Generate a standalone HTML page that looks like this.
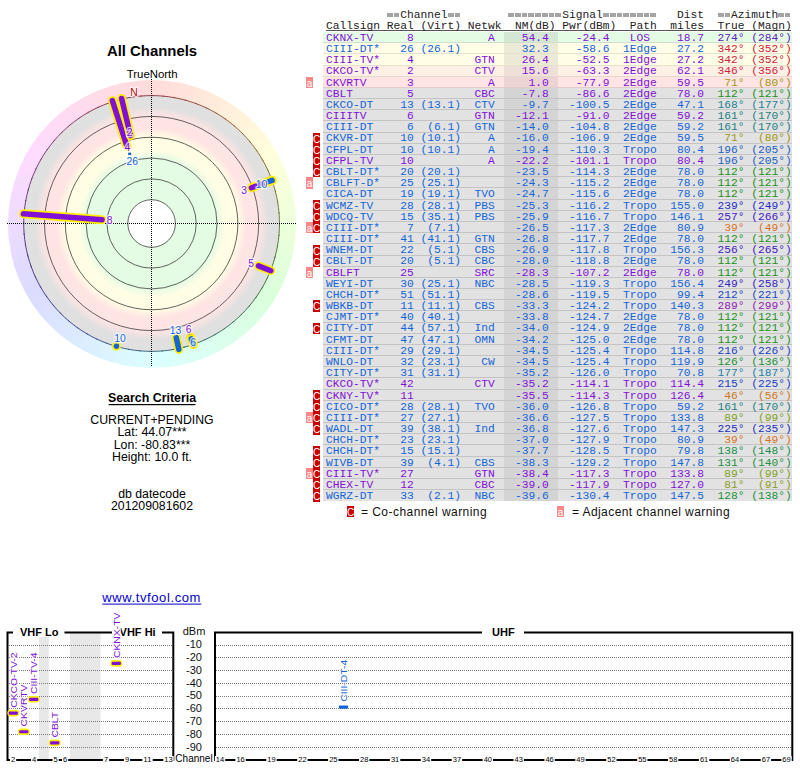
<!DOCTYPE html>
<html><head><meta charset="utf-8"><style>
html,body{margin:0;padding:0;background:#fff;width:800px;height:768px;overflow:hidden;position:relative}
.s{font-family:"Liberation Sans",sans-serif}
.m{font-family:"Liberation Mono",monospace}
.a{position:absolute;white-space:pre}
.row{position:absolute;left:323px;width:469px}
.sep{position:absolute;left:323px;width:469px;height:1px;z-index:1}
.tx{position:absolute;z-index:2;left:325.90px;font-family:"Liberation Mono",monospace;font-size:11.25px;line-height:11.18px;white-space:pre}
.fl{position:absolute;width:7px;color:#fff;font-family:"Liberation Sans",sans-serif;font-size:10px;line-height:11px;text-align:center;overflow:hidden}
</style></head><body>

<div class="tx" style="top:9.6px;color:#222">           Channel                 Signal           Dist    Azimuth</div>
<div class="a" style="left:386.85px;top:13px;width:12.50px;height:4px;background:repeating-linear-gradient(90deg,#a4a4a4 0,#a4a4a4 5.75px,transparent 5.75px,transparent 6.75px)"></div>
<div class="a" style="left:447.60px;top:13px;width:12.50px;height:4px;background:repeating-linear-gradient(90deg,#a4a4a4 0,#a4a4a4 5.75px,transparent 5.75px,transparent 6.75px)"></div>
<div class="a" style="left:508.35px;top:13px;width:53.00px;height:4px;background:repeating-linear-gradient(90deg,#a4a4a4 0,#a4a4a4 5.75px,transparent 5.75px,transparent 6.75px)"></div>
<div class="a" style="left:602.85px;top:13px;width:53.00px;height:4px;background:repeating-linear-gradient(90deg,#a4a4a4 0,#a4a4a4 5.75px,transparent 5.75px,transparent 6.75px)"></div>
<div class="a" style="left:717.60px;top:13px;width:12.50px;height:4px;background:repeating-linear-gradient(90deg,#a4a4a4 0,#a4a4a4 5.75px,transparent 5.75px,transparent 6.75px)"></div>
<div class="a" style="left:778.35px;top:13px;width:12.50px;height:4px;background:repeating-linear-gradient(90deg,#a4a4a4 0,#a4a4a4 5.75px,transparent 5.75px,transparent 6.75px)"></div>
<div class="tx" style="top:20.9px;color:#222">Callsign Real (Virt) Netwk  NM(dB) Pwr(dBm)  Path  miles  True (Magn)</div>
<div class="a" style="left:326px;top:30px;width:465px;height:1px;background:#555"></div>
<div class="row" style="top:31.60px;height:11.18px;background:#e4fce4"></div>
<div class="row" style="top:31.60px;height:11.18px;left:504px;width:54px;background:#d4e6d4"></div>
<div class="sep" style="top:42.18px;background:#cfe0cf"></div>
<div class="tx" style="top:32.90px;color:#8010d8">CKNX-TV     8           A    54.4    -24.4   LOS    18.7<span style="color:#6020c0">  274° (284°)</span></div>
<div class="row" style="top:42.78px;height:11.18px;background:#fffde6"></div>
<div class="row" style="top:42.78px;height:11.18px;left:504px;width:54px;background:#ecead6"></div>
<div class="sep" style="top:53.35px;background:#e4e2cc"></div>
<div class="tx" style="top:44.08px;color:#1464d8">CIII-DT*   26 (26.1)         32.3    -58.6  1Edge   27.2<span style="color:#d02040">  342° (352°)</span></div>
<div class="row" style="top:53.95px;height:11.18px;background:#fffde6"></div>
<div class="row" style="top:53.95px;height:11.18px;left:504px;width:54px;background:#ecead6"></div>
<div class="sep" style="top:64.53px;background:#e4e2cc"></div>
<div class="tx" style="top:55.25px;color:#8010d8">CIII-TV*    4         GTN    26.4    -52.5  1Edge   27.2<span style="color:#d02040">  342° (352°)</span></div>
<div class="row" style="top:65.12px;height:11.18px;background:#fff0e6"></div>
<div class="row" style="top:65.12px;height:11.18px;left:504px;width:54px;background:#eee0d6"></div>
<div class="sep" style="top:75.70px;background:#e6d8cc"></div>
<div class="tx" style="top:66.42px;color:#8010d8">CKCO-TV*    2         CTV    15.6    -63.3  2Edge   62.1<span style="color:#d0203e">  346° (356°)</span></div>
<div class="row" style="top:76.30px;height:11.18px;background:#ffe4e4"></div>
<div class="row" style="top:76.30px;height:11.18px;left:504px;width:54px;background:#ecd4d4"></div>
<div class="sep" style="top:86.88px;background:#e4cccc"></div>
<div class="tx" style="top:77.60px;color:#8010d8">CKVRTV      3           A     1.0    -77.9  2Edge   59.5<span style="color:#a09610">   71°  (80°)</span></div>
<div class="fl" style="left:306px;top:76.90px;height:11.18px;background:#f88888;line-height:13px">a</div>
<div class="row" style="top:87.47px;height:11.18px;background:#e2e2e2"></div>
<div class="row" style="top:87.47px;height:11.18px;left:504px;width:54px;background:#d4d4d4"></div>
<div class="sep" style="top:98.05px;background:#c4c4c4"></div>
<div class="tx" style="top:88.77px;color:#8010d8">CBLT        5         CBC    -7.8    -86.6  2Edge   78.0<span style="color:#209020">  112° (121°)</span></div>
<div class="row" style="top:98.65px;height:11.18px;background:#e2e2e2"></div>
<div class="row" style="top:98.65px;height:11.18px;left:504px;width:54px;background:#d4d4d4"></div>
<div class="sep" style="top:109.23px;background:#c4c4c4"></div>
<div class="tx" style="top:99.95px;color:#1464d8">CKCO-DT    13 (13.1)  CTV    -9.7   -100.5  2Edge   47.1<span style="color:#208092">  168° (177°)</span></div>
<div class="row" style="top:109.83px;height:11.18px;background:#e2e2e2"></div>
<div class="row" style="top:109.83px;height:11.18px;left:504px;width:54px;background:#d4d4d4"></div>
<div class="sep" style="top:120.40px;background:#c4c4c4"></div>
<div class="tx" style="top:111.13px;color:#8010d8">CIIITV      6         GTN   -12.1    -91.0  2Edge   59.2<span style="color:#208080">  161° (170°)</span></div>
<div class="row" style="top:121.00px;height:11.18px;background:#e2e2e2"></div>
<div class="row" style="top:121.00px;height:11.18px;left:504px;width:54px;background:#d4d4d4"></div>
<div class="sep" style="top:131.58px;background:#c4c4c4"></div>
<div class="tx" style="top:122.30px;color:#1464d8">CIII-DT     6  (6.1)  GTN   -14.0   -104.8  2Edge   59.2<span style="color:#208080">  161° (170°)</span></div>
<div class="row" style="top:132.18px;height:11.18px;background:#e2e2e2"></div>
<div class="row" style="top:132.18px;height:11.18px;left:504px;width:54px;background:#d4d4d4"></div>
<div class="sep" style="top:142.75px;background:#c4c4c4"></div>
<div class="tx" style="top:133.48px;color:#1464d8">CKVR-DT    10 (10.1)    A   -16.0   -106.9  2Edge   59.5<span style="color:#a09610">   71°  (80°)</span></div>
<div class="fl" style="left:313px;top:132.78px;height:11.18px;background:#c80000;line-height:13px">C</div>
<div class="row" style="top:143.35px;height:11.18px;background:#e2e2e2"></div>
<div class="row" style="top:143.35px;height:11.18px;left:504px;width:54px;background:#d4d4d4"></div>
<div class="sep" style="top:153.93px;background:#c4c4c4"></div>
<div class="tx" style="top:144.65px;color:#1464d8">CFPL-DT    10 (10.1)    A   -19.4   -110.3  Tropo   80.4<span style="color:#2060c0">  196° (205°)</span></div>
<div class="fl" style="left:313px;top:143.95px;height:11.18px;background:#c80000;line-height:13px">C</div>
<div class="row" style="top:154.53px;height:11.18px;background:#e2e2e2"></div>
<div class="row" style="top:154.53px;height:11.18px;left:504px;width:54px;background:#d4d4d4"></div>
<div class="sep" style="top:165.10px;background:#c4c4c4"></div>
<div class="tx" style="top:155.83px;color:#8010d8">CFPL-TV    10           A   -22.2   -101.1  Tropo   80.4<span style="color:#2060c0">  196° (205°)</span></div>
<div class="fl" style="left:313px;top:155.12px;height:11.18px;background:#c80000;line-height:13px">C</div>
<div class="row" style="top:165.70px;height:11.18px;background:#e2e2e2"></div>
<div class="row" style="top:165.70px;height:11.18px;left:504px;width:54px;background:#d4d4d4"></div>
<div class="sep" style="top:176.28px;background:#c4c4c4"></div>
<div class="tx" style="top:167.00px;color:#1464d8">CBLT-DT*   20 (20.1)        -23.5   -114.3  2Edge   78.0<span style="color:#209020">  112° (121°)</span></div>
<div class="fl" style="left:313px;top:166.30px;height:11.18px;background:#c80000;line-height:13px">C</div>
<div class="row" style="top:176.88px;height:11.18px;background:#e2e2e2"></div>
<div class="row" style="top:176.88px;height:11.18px;left:504px;width:54px;background:#d4d4d4"></div>
<div class="sep" style="top:187.45px;background:#c4c4c4"></div>
<div class="tx" style="top:178.18px;color:#1464d8">CBLFT-D*   25 (25.1)        -24.3   -115.2  2Edge   78.0<span style="color:#209020">  112° (121°)</span></div>
<div class="fl" style="left:306px;top:177.47px;height:11.18px;background:#f88888;line-height:13px">a</div>
<div class="row" style="top:188.05px;height:11.18px;background:#e2e2e2"></div>
<div class="row" style="top:188.05px;height:11.18px;left:504px;width:54px;background:#d4d4d4"></div>
<div class="sep" style="top:198.63px;background:#c4c4c4"></div>
<div class="tx" style="top:189.35px;color:#1464d8">CICA-DT    19 (19.1)  TVO   -24.7   -115.6  2Edge   78.0<span style="color:#209020">  112° (121°)</span></div>
<div class="row" style="top:199.22px;height:11.18px;background:#e2e2e2"></div>
<div class="row" style="top:199.22px;height:11.18px;left:504px;width:54px;background:#d4d4d4"></div>
<div class="sep" style="top:209.80px;background:#c4c4c4"></div>
<div class="tx" style="top:200.53px;color:#1464d8">WCMZ-TV    28 (28.1)  PBS   -25.3   -116.2  Tropo  155.0<span style="color:#2828c8">  239° (249°)</span></div>
<div class="fl" style="left:313px;top:199.82px;height:11.18px;background:#c80000;line-height:13px">C</div>
<div class="row" style="top:210.40px;height:11.18px;background:#e2e2e2"></div>
<div class="row" style="top:210.40px;height:11.18px;left:504px;width:54px;background:#d4d4d4"></div>
<div class="sep" style="top:220.98px;background:#c4c4c4"></div>
<div class="tx" style="top:211.70px;color:#1464d8">WDCQ-TV    15 (35.1)  PBS   -25.9   -116.7  Tropo  146.1<span style="color:#4020c0">  257° (266°)</span></div>
<div class="fl" style="left:313px;top:211.00px;height:11.18px;background:#c80000;line-height:13px">C</div>
<div class="row" style="top:221.58px;height:11.18px;background:#e2e2e2"></div>
<div class="row" style="top:221.58px;height:11.18px;left:504px;width:54px;background:#d4d4d4"></div>
<div class="sep" style="top:232.15px;background:#c4c4c4"></div>
<div class="tx" style="top:222.88px;color:#1464d8">CIII-DT*    7  (7.1)        -26.5   -117.3  2Edge   80.9<span style="color:#d87020">   39°  (49°)</span></div>
<div class="fl" style="left:313px;top:222.18px;height:11.18px;background:#c80000;line-height:13px">C</div>
<div class="fl" style="left:306px;top:222.18px;height:11.18px;background:#f88888;line-height:13px">a</div>
<div class="row" style="top:232.75px;height:11.18px;background:#e2e2e2"></div>
<div class="row" style="top:232.75px;height:11.18px;left:504px;width:54px;background:#d4d4d4"></div>
<div class="sep" style="top:243.33px;background:#c4c4c4"></div>
<div class="tx" style="top:234.05px;color:#1464d8">CIII-DT*   41 (41.1)  GTN   -26.8   -117.7  2Edge   78.0<span style="color:#209020">  112° (121°)</span></div>
<div class="row" style="top:243.93px;height:11.18px;background:#e2e2e2"></div>
<div class="row" style="top:243.93px;height:11.18px;left:504px;width:54px;background:#d4d4d4"></div>
<div class="sep" style="top:254.50px;background:#c4c4c4"></div>
<div class="tx" style="top:245.23px;color:#1464d8">WNEM-DT    22  (5.1)  CBS   -26.9   -117.8  Tropo  156.3<span style="color:#3f20c0">  256° (265°)</span></div>
<div class="fl" style="left:313px;top:244.53px;height:11.18px;background:#c80000;line-height:13px">C</div>
<div class="row" style="top:255.10px;height:11.18px;background:#e2e2e2"></div>
<div class="row" style="top:255.10px;height:11.18px;left:504px;width:54px;background:#d4d4d4"></div>
<div class="sep" style="top:265.67px;background:#c4c4c4"></div>
<div class="tx" style="top:256.40px;color:#1464d8">CBLT-DT    20  (5.1)  CBC   -28.0   -118.8  2Edge   78.0<span style="color:#209020">  112° (121°)</span></div>
<div class="fl" style="left:313px;top:255.70px;height:11.18px;background:#c80000;line-height:13px">C</div>
<div class="row" style="top:266.28px;height:11.18px;background:#e2e2e2"></div>
<div class="row" style="top:266.28px;height:11.18px;left:504px;width:54px;background:#d4d4d4"></div>
<div class="sep" style="top:276.85px;background:#c4c4c4"></div>
<div class="tx" style="top:267.58px;color:#8010d8">CBLFT      25         SRC   -28.3   -107.2  2Edge   78.0<span style="color:#209020">  112° (121°)</span></div>
<div class="fl" style="left:306px;top:266.88px;height:11.18px;background:#f88888;line-height:13px">a</div>
<div class="row" style="top:277.45px;height:11.18px;background:#e2e2e2"></div>
<div class="row" style="top:277.45px;height:11.18px;left:504px;width:54px;background:#d4d4d4"></div>
<div class="sep" style="top:288.03px;background:#c4c4c4"></div>
<div class="tx" style="top:278.75px;color:#1464d8">WEYI-DT    30 (25.1)  NBC   -28.5   -119.3  Tropo  156.4<span style="color:#3524c4">  249° (258°)</span></div>
<div class="row" style="top:288.63px;height:11.18px;background:#e2e2e2"></div>
<div class="row" style="top:288.63px;height:11.18px;left:504px;width:54px;background:#d4d4d4"></div>
<div class="sep" style="top:299.20px;background:#c4c4c4"></div>
<div class="tx" style="top:289.93px;color:#1464d8">CHCH-DT*   51 (51.1)        -28.6   -119.5  Tropo   99.4<span style="color:#2046c0">  212° (221°)</span></div>
<div class="row" style="top:299.80px;height:11.18px;background:#e2e2e2"></div>
<div class="row" style="top:299.80px;height:11.18px;left:504px;width:54px;background:#d4d4d4"></div>
<div class="sep" style="top:310.38px;background:#c4c4c4"></div>
<div class="tx" style="top:301.10px;color:#1464d8">WBKB-DT    11 (11.1)  CBS   -33.3   -124.2  Tropo  140.3<span style="color:#9020b0">  289° (299°)</span></div>
<div class="fl" style="left:313px;top:300.40px;height:11.18px;background:#c80000;line-height:13px">C</div>
<div class="row" style="top:310.98px;height:11.18px;background:#e2e2e2"></div>
<div class="row" style="top:310.98px;height:11.18px;left:504px;width:54px;background:#d4d4d4"></div>
<div class="sep" style="top:321.55px;background:#c4c4c4"></div>
<div class="tx" style="top:312.28px;color:#1464d8">CJMT-DT*   40 (40.1)        -33.8   -124.7  2Edge   78.0<span style="color:#209020">  112° (121°)</span></div>
<div class="row" style="top:322.15px;height:11.18px;background:#e2e2e2"></div>
<div class="row" style="top:322.15px;height:11.18px;left:504px;width:54px;background:#d4d4d4"></div>
<div class="sep" style="top:332.73px;background:#c4c4c4"></div>
<div class="tx" style="top:323.45px;color:#1464d8">CITY-DT    44 (57.1)  Ind   -34.0   -124.9  2Edge   78.0<span style="color:#209020">  112° (121°)</span></div>
<div class="fl" style="left:313px;top:322.75px;height:11.18px;background:#c80000;line-height:13px">C</div>
<div class="row" style="top:333.33px;height:11.18px;background:#e2e2e2"></div>
<div class="row" style="top:333.33px;height:11.18px;left:504px;width:54px;background:#d4d4d4"></div>
<div class="sep" style="top:343.90px;background:#c4c4c4"></div>
<div class="tx" style="top:334.63px;color:#1464d8">CFMT-DT    47 (47.1)  OMN   -34.2   -125.0  2Edge   78.0<span style="color:#209020">  112° (121°)</span></div>
<div class="row" style="top:344.50px;height:11.18px;background:#e2e2e2"></div>
<div class="row" style="top:344.50px;height:11.18px;left:504px;width:54px;background:#d4d4d4"></div>
<div class="sep" style="top:355.08px;background:#c4c4c4"></div>
<div class="tx" style="top:345.80px;color:#1464d8">CIII-DT*   29 (29.1)        -34.5   -125.4  Tropo  114.8<span style="color:#203fc0">  216° (226°)</span></div>
<div class="row" style="top:355.68px;height:11.18px;background:#e2e2e2"></div>
<div class="row" style="top:355.68px;height:11.18px;left:504px;width:54px;background:#d4d4d4"></div>
<div class="sep" style="top:366.25px;background:#c4c4c4"></div>
<div class="tx" style="top:356.98px;color:#1464d8">WNLO-DT    32 (23.1)   CW   -34.5   -125.4  Tropo  119.9<span style="color:#209037">  126° (136°)</span></div>
<div class="row" style="top:366.85px;height:11.18px;background:#e2e2e2"></div>
<div class="row" style="top:366.85px;height:11.18px;left:504px;width:54px;background:#d4d4d4"></div>
<div class="sep" style="top:377.43px;background:#c4c4c4"></div>
<div class="tx" style="top:368.15px;color:#1464d8">CITY-DT*   31 (31.1)        -35.2   -126.0  Tropo   70.8<span style="color:#2080a8">  177° (187°)</span></div>
<div class="row" style="top:378.03px;height:11.18px;background:#e2e2e2"></div>
<div class="row" style="top:378.03px;height:11.18px;left:504px;width:54px;background:#d4d4d4"></div>
<div class="sep" style="top:388.60px;background:#c4c4c4"></div>
<div class="tx" style="top:379.33px;color:#8010d8">CKCO-TV*   42         CTV   -35.2   -114.1  Tropo  114.4<span style="color:#2041c0">  215° (225°)</span></div>
<div class="row" style="top:389.20px;height:11.18px;background:#e2e2e2"></div>
<div class="row" style="top:389.20px;height:11.18px;left:504px;width:54px;background:#d4d4d4"></div>
<div class="sep" style="top:399.78px;background:#c4c4c4"></div>
<div class="tx" style="top:390.50px;color:#8010d8">CKNY-TV*   11               -35.5   -114.3  Tropo  126.4<span style="color:#cc781c">   46°  (56°)</span></div>
<div class="fl" style="left:313px;top:389.80px;height:11.18px;background:#c80000;line-height:13px">C</div>
<div class="row" style="top:400.38px;height:11.18px;background:#e2e2e2"></div>
<div class="row" style="top:400.38px;height:11.18px;left:504px;width:54px;background:#d4d4d4"></div>
<div class="sep" style="top:410.95px;background:#c4c4c4"></div>
<div class="tx" style="top:401.68px;color:#1464d8">CICO-DT*   28 (28.1)  TVO   -36.0   -126.8  Tropo   59.2<span style="color:#208080">  161° (170°)</span></div>
<div class="fl" style="left:313px;top:400.98px;height:11.18px;background:#c80000;line-height:13px">C</div>
<div class="row" style="top:411.55px;height:11.18px;background:#e2e2e2"></div>
<div class="row" style="top:411.55px;height:11.18px;left:504px;width:54px;background:#d4d4d4"></div>
<div class="sep" style="top:422.13px;background:#c4c4c4"></div>
<div class="tx" style="top:412.85px;color:#1464d8">CIII-DT*   27 (27.1)        -36.6   -127.5  Tropo  133.8<span style="color:#80a020">   89°  (99°)</span></div>
<div class="fl" style="left:313px;top:412.15px;height:11.18px;background:#c80000;line-height:13px">C</div>
<div class="fl" style="left:306px;top:412.15px;height:11.18px;background:#f88888;line-height:13px">a</div>
<div class="row" style="top:422.73px;height:11.18px;background:#e2e2e2"></div>
<div class="row" style="top:422.73px;height:11.18px;left:504px;width:54px;background:#d4d4d4"></div>
<div class="sep" style="top:433.30px;background:#c4c4c4"></div>
<div class="tx" style="top:424.03px;color:#1464d8">WADL-DT    39 (38.1)  Ind   -36.8   -127.6  Tropo  147.3<span style="color:#2030c0">  225° (235°)</span></div>
<div class="fl" style="left:313px;top:423.33px;height:11.18px;background:#c80000;line-height:13px">C</div>
<div class="row" style="top:433.90px;height:11.18px;background:#e2e2e2"></div>
<div class="row" style="top:433.90px;height:11.18px;left:504px;width:54px;background:#d4d4d4"></div>
<div class="sep" style="top:444.48px;background:#c4c4c4"></div>
<div class="tx" style="top:435.20px;color:#1464d8">CHCH-DT*   23 (23.1)        -37.0   -127.9  Tropo   80.9<span style="color:#d87020">   39°  (49°)</span></div>
<div class="row" style="top:445.08px;height:11.18px;background:#e2e2e2"></div>
<div class="row" style="top:445.08px;height:11.18px;left:504px;width:54px;background:#d4d4d4"></div>
<div class="sep" style="top:455.65px;background:#c4c4c4"></div>
<div class="tx" style="top:446.38px;color:#1464d8">CHCH-DT*   15 (15.1)        -37.7   -128.5  Tropo   79.8<span style="color:#20904a">  138° (148°)</span></div>
<div class="fl" style="left:313px;top:445.68px;height:11.18px;background:#c80000;line-height:13px">C</div>
<div class="row" style="top:456.25px;height:11.18px;background:#e2e2e2"></div>
<div class="row" style="top:456.25px;height:11.18px;left:504px;width:54px;background:#d4d4d4"></div>
<div class="sep" style="top:466.83px;background:#c4c4c4"></div>
<div class="tx" style="top:457.55px;color:#1464d8">WIVB-DT    39  (4.1)  CBS   -38.3   -129.2  Tropo  147.8<span style="color:#20903f">  131° (140°)</span></div>
<div class="fl" style="left:313px;top:456.85px;height:11.18px;background:#c80000;line-height:13px">C</div>
<div class="row" style="top:467.43px;height:11.18px;background:#e2e2e2"></div>
<div class="row" style="top:467.43px;height:11.18px;left:504px;width:54px;background:#d4d4d4"></div>
<div class="sep" style="top:478.00px;background:#c4c4c4"></div>
<div class="tx" style="top:468.73px;color:#8010d8">CIII-TV*   27         GTN   -38.4   -117.3  Tropo  133.8<span style="color:#80a020">   89°  (99°)</span></div>
<div class="fl" style="left:313px;top:468.03px;height:11.18px;background:#c80000;line-height:13px">C</div>
<div class="fl" style="left:306px;top:468.03px;height:11.18px;background:#f88888;line-height:13px">a</div>
<div class="row" style="top:478.60px;height:11.18px;background:#e2e2e2"></div>
<div class="row" style="top:478.60px;height:11.18px;left:504px;width:54px;background:#d4d4d4"></div>
<div class="sep" style="top:489.18px;background:#c4c4c4"></div>
<div class="tx" style="top:479.90px;color:#8010d8">CHEX-TV    12         CBC   -39.0   -117.9  Tropo  127.0<span style="color:#8e9c19">   81°  (91°)</span></div>
<div class="fl" style="left:313px;top:479.20px;height:11.18px;background:#c80000;line-height:13px">C</div>
<div class="row" style="top:489.78px;height:11.18px;background:#e2e2e2"></div>
<div class="row" style="top:489.78px;height:11.18px;left:504px;width:54px;background:#d4d4d4"></div>
<div class="tx" style="top:491.08px;color:#1464d8">WGRZ-DT    33  (2.1)  NBC   -39.6   -130.4  Tropo  147.5<span style="color:#20903a">  128° (138°)</span></div>
<div class="fl" style="left:313px;top:490.38px;height:11.18px;background:#c80000;line-height:13px">C</div>
<div class="fl" style="left:347px;top:506px;height:11px;background:#c80000;line-height:13px">C</div>
<div class="fl" style="left:557px;top:506px;height:11px;background:#f88888;line-height:13px">a</div>
<svg class="a" style="left:0;top:0" width="800" height="768" font-family="Liberation Sans">
<text x="361" y="515.6" font-size="12" letter-spacing="0.45" fill="#111">= Co-channel warning</text>
<text x="572" y="515.6" font-size="12" letter-spacing="0.42" fill="#111">= Adjacent channel warning</text>
<text x="152" y="55.7" text-anchor="middle" font-size="14.9" font-weight="bold" fill="#000">All Channels</text>
<text x="152.2" y="77.8" text-anchor="middle" font-size="11.4" fill="#000">TrueNorth</text>
<text x="152" y="401.9" text-anchor="middle" font-size="12.4" font-weight="bold" fill="#000">Search Criteria</text>
<rect x="108.7" y="404" width="86.7" height="1.2" fill="#000"/>
<text x="152" y="423.9" text-anchor="middle" font-size="12.3" fill="#000">CURRENT+PENDING</text>
<text x="152" y="436.4" text-anchor="middle" font-size="12.3" fill="#000">Lat: 44.07***</text>
<text x="152" y="448.5" text-anchor="middle" font-size="12.3" fill="#000">Lon: -80.83***</text>
<text x="152" y="460.8" text-anchor="middle" font-size="12.3" fill="#000">Height: 10.0 ft.</text>
<text x="152" y="498.0" text-anchor="middle" font-size="12.3" fill="#000">db datecode</text>
<text x="152" y="509.6" text-anchor="middle" font-size="12.3" fill="#000">201209081602</text>
<text x="102.3" y="602" font-size="13" letter-spacing="0.6" fill="#0000cc">www.tvfool.com</text>
<rect x="102.3" y="603.6" width="99" height="1" fill="#0000cc"/>
</svg>
<div class="a" style="left:7.60px;top:79.50px;width:288px;height:288px;border-radius:50%;background:conic-gradient(hsl(0,100%,93%) 0deg,hsl(15,100%,93%) 15deg,hsl(30,100%,93%) 30deg,hsl(45,100%,93%) 45deg,hsl(60,100%,93%) 60deg,hsl(75,100%,93%) 75deg,hsl(90,100%,93%) 90deg,hsl(105,100%,93%) 105deg,hsl(120,100%,93%) 120deg,hsl(135,100%,93%) 135deg,hsl(150,100%,93%) 150deg,hsl(165,100%,93%) 165deg,hsl(180,100%,93%) 180deg,hsl(195,100%,93%) 195deg,hsl(210,100%,93%) 210deg,hsl(225,100%,93%) 225deg,hsl(240,100%,93%) 240deg,hsl(255,100%,93%) 255deg,hsl(270,100%,93%) 270deg,hsl(285,100%,93%) 285deg,hsl(300,100%,93%) 300deg,hsl(315,100%,93%) 315deg,hsl(330,100%,93%) 330deg,hsl(345,100%,93%) 345deg,hsl(360,100%,93%) 360deg)"></div>
<svg class="a" style="left:0;top:0" width="300" height="400" viewBox="0 0 300 400">
<defs><radialGradient id="bands" gradientUnits="userSpaceOnUse" cx="151.60" cy="223.50" r="128">
<stop offset="0" stop-color="#e4fce4"/><stop offset="0.511" stop-color="#e4fce4"/>
<stop offset="0.575" stop-color="#fffde4"/><stop offset="0.674" stop-color="#fffde4"/>
<stop offset="0.742" stop-color="#ffe4e4"/><stop offset="0.837" stop-color="#ffe4e4"/>
<stop offset="0.915" stop-color="#e0e0e0"/><stop offset="1" stop-color="#e0e0e0"/>
</radialGradient></defs>
<circle cx="151.60" cy="223.50" r="128" fill="url(#bands)"/>
<circle cx="151.60" cy="223.50" r="23.8" fill="#fff"/>
<circle cx="151.60" cy="223.50" r="23.80" fill="none" stroke="#3c3c3c" stroke-width="0.8"/>
<circle cx="151.60" cy="223.50" r="44.62" fill="none" stroke="#3c3c3c" stroke-width="0.8"/>
<circle cx="151.60" cy="223.50" r="65.44" fill="none" stroke="#3c3c3c" stroke-width="0.8"/>
<circle cx="151.60" cy="223.50" r="86.26" fill="none" stroke="#3c3c3c" stroke-width="0.8"/>
<circle cx="151.60" cy="223.50" r="107.08" fill="none" stroke="#3c3c3c" stroke-width="0.8"/>
<path d="M151.60,95.60 A127.90,127.90 0 0 1 164.08,96.21" fill="none" stroke="#8d2f38" stroke-width="0.9"/>
<path d="M162.75,96.09 A127.90,127.90 0 0 1 175.13,97.78" fill="none" stroke="#8e3437" stroke-width="0.9"/>
<path d="M173.81,97.54 A127.90,127.90 0 0 1 185.99,100.31" fill="none" stroke="#8f3a35" stroke-width="0.9"/>
<path d="M184.70,99.96 A127.90,127.90 0 0 1 196.60,103.78" fill="none" stroke="#8f4033" stroke-width="0.9"/>
<path d="M195.34,103.31 A127.90,127.90 0 0 1 206.86,108.16" fill="none" stroke="#904532" stroke-width="0.9"/>
<path d="M205.65,107.58 A127.90,127.90 0 0 1 216.71,113.41" fill="none" stroke="#904b30" stroke-width="0.9"/>
<path d="M215.55,112.74 A127.90,127.90 0 0 1 226.05,119.50" fill="none" stroke="#91512e" stroke-width="0.9"/>
<path d="M224.96,118.73 A127.90,127.90 0 0 1 234.83,126.39" fill="none" stroke="#91562d" stroke-width="0.9"/>
<path d="M233.81,125.52 A127.90,127.90 0 0 1 242.98,134.01" fill="none" stroke="#8e5a2b" stroke-width="0.9"/>
<path d="M242.04,133.06 A127.90,127.90 0 0 1 250.43,142.32" fill="none" stroke="#895e2a" stroke-width="0.9"/>
<path d="M249.58,141.29 A127.90,127.90 0 0 1 257.13,151.24" fill="none" stroke="#846128" stroke-width="0.9"/>
<path d="M256.37,150.14 A127.90,127.90 0 0 1 263.03,160.71" fill="none" stroke="#806427" stroke-width="0.9"/>
<path d="M262.36,159.55 A127.90,127.90 0 0 1 268.08,170.66" fill="none" stroke="#7b6826" stroke-width="0.9"/>
<path d="M267.52,169.45 A127.90,127.90 0 0 1 272.24,181.02" fill="none" stroke="#766b24" stroke-width="0.9"/>
<path d="M271.79,179.76 A127.90,127.90 0 0 1 275.48,191.69" fill="none" stroke="#716e24" stroke-width="0.9"/>
<path d="M275.14,190.40 A127.90,127.90 0 0 1 277.78,202.61" fill="none" stroke="#6c6f27" stroke-width="0.9"/>
<path d="M277.56,201.29 A127.90,127.90 0 0 1 279.12,213.69" fill="none" stroke="#687029" stroke-width="0.9"/>
<path d="M279.01,212.35 A127.90,127.90 0 0 1 279.49,224.84" fill="none" stroke="#63722c" stroke-width="0.9"/>
<path d="M279.50,223.50 A127.90,127.90 0 0 1 278.89,235.98" fill="none" stroke="#59712c" stroke-width="0.9"/>
<path d="M279.01,234.65 A127.90,127.90 0 0 1 277.32,247.03" fill="none" stroke="#4e6f2c" stroke-width="0.9"/>
<path d="M277.56,245.71 A127.90,127.90 0 0 1 274.79,257.89" fill="none" stroke="#426e2c" stroke-width="0.9"/>
<path d="M275.14,256.60 A127.90,127.90 0 0 1 271.32,268.50" fill="none" stroke="#376b2c" stroke-width="0.9"/>
<path d="M271.79,267.24 A127.90,127.90 0 0 1 266.94,278.76" fill="none" stroke="#2c6a2d" stroke-width="0.9"/>
<path d="M267.52,277.55 A127.90,127.90 0 0 1 261.69,288.61" fill="none" stroke="#2c6a31" stroke-width="0.9"/>
<path d="M262.36,287.45 A127.90,127.90 0 0 1 255.60,297.95" fill="none" stroke="#2c6a35" stroke-width="0.9"/>
<path d="M256.37,296.86 A127.90,127.90 0 0 1 248.71,306.73" fill="none" stroke="#2c6a3a" stroke-width="0.9"/>
<path d="M249.58,305.71 A127.90,127.90 0 0 1 241.09,314.88" fill="none" stroke="#2c6a3e" stroke-width="0.9"/>
<path d="M242.04,313.94 A127.90,127.90 0 0 1 232.78,322.33" fill="none" stroke="#2c6a43" stroke-width="0.9"/>
<path d="M233.81,321.48 A127.90,127.90 0 0 1 223.86,329.03" fill="none" stroke="#2c6849" stroke-width="0.9"/>
<path d="M224.96,328.27 A127.90,127.90 0 0 1 214.39,334.93" fill="none" stroke="#2c664f" stroke-width="0.9"/>
<path d="M215.55,334.26 A127.90,127.90 0 0 1 204.44,339.98" fill="none" stroke="#2c6456" stroke-width="0.9"/>
<path d="M205.65,339.42 A127.90,127.90 0 0 1 194.08,344.14" fill="none" stroke="#2c625d" stroke-width="0.9"/>
<path d="M195.34,343.69 A127.90,127.90 0 0 1 183.41,347.38" fill="none" stroke="#2c6163" stroke-width="0.9"/>
<path d="M184.70,347.04 A127.90,127.90 0 0 1 172.49,349.68" fill="none" stroke="#2c616a" stroke-width="0.9"/>
<path d="M173.81,349.46 A127.90,127.90 0 0 1 161.41,351.02" fill="none" stroke="#2c6171" stroke-width="0.9"/>
<path d="M162.75,350.91 A127.90,127.90 0 0 1 150.26,351.39" fill="none" stroke="#2c6077" stroke-width="0.9"/>
<path d="M151.60,351.40 A127.90,127.90 0 0 1 139.12,350.79" fill="none" stroke="#2c5c7b" stroke-width="0.9"/>
<path d="M140.45,350.91 A127.90,127.90 0 0 1 128.07,349.22" fill="none" stroke="#2c577e" stroke-width="0.9"/>
<path d="M129.39,349.46 A127.90,127.90 0 0 1 117.21,346.69" fill="none" stroke="#2c5382" stroke-width="0.9"/>
<path d="M118.50,347.04 A127.90,127.90 0 0 1 106.60,343.22" fill="none" stroke="#2c4e84" stroke-width="0.9"/>
<path d="M107.86,343.69 A127.90,127.90 0 0 1 96.34,338.84" fill="none" stroke="#2c4984" stroke-width="0.9"/>
<path d="M97.55,339.42 A127.90,127.90 0 0 1 86.49,333.59" fill="none" stroke="#2c4584" stroke-width="0.9"/>
<path d="M87.65,334.26 A127.90,127.90 0 0 1 77.15,327.50" fill="none" stroke="#2c4084" stroke-width="0.9"/>
<path d="M78.24,328.27 A127.90,127.90 0 0 1 68.37,320.61" fill="none" stroke="#2c3c84" stroke-width="0.9"/>
<path d="M69.39,321.48 A127.90,127.90 0 0 1 60.22,312.99" fill="none" stroke="#2c3784" stroke-width="0.9"/>
<path d="M61.16,313.94 A127.90,127.90 0 0 1 52.77,304.68" fill="none" stroke="#2d3485" stroke-width="0.9"/>
<path d="M53.62,305.71 A127.90,127.90 0 0 1 46.07,295.76" fill="none" stroke="#2e3386" stroke-width="0.9"/>
<path d="M46.83,296.86 A127.90,127.90 0 0 1 40.17,286.29" fill="none" stroke="#303188" stroke-width="0.9"/>
<path d="M40.84,287.45 A127.90,127.90 0 0 1 35.12,276.34" fill="none" stroke="#332f87" stroke-width="0.9"/>
<path d="M35.68,277.55 A127.90,127.90 0 0 1 30.96,265.98" fill="none" stroke="#372e86" stroke-width="0.9"/>
<path d="M31.41,267.24 A127.90,127.90 0 0 1 27.72,255.31" fill="none" stroke="#3a2d85" stroke-width="0.9"/>
<path d="M28.06,256.60 A127.90,127.90 0 0 1 25.42,244.39" fill="none" stroke="#3e2c84" stroke-width="0.9"/>
<path d="M25.64,245.71 A127.90,127.90 0 0 1 24.08,233.31" fill="none" stroke="#432c84" stroke-width="0.9"/>
<path d="M24.19,234.65 A127.90,127.90 0 0 1 23.71,222.16" fill="none" stroke="#492c84" stroke-width="0.9"/>
<path d="M23.70,223.50 A127.90,127.90 0 0 1 24.31,211.02" fill="none" stroke="#4e2c84" stroke-width="0.9"/>
<path d="M24.19,212.35 A127.90,127.90 0 0 1 25.88,199.97" fill="none" stroke="#552c82" stroke-width="0.9"/>
<path d="M25.64,201.29 A127.90,127.90 0 0 1 28.41,189.11" fill="none" stroke="#5e2c7f" stroke-width="0.9"/>
<path d="M28.06,190.40 A127.90,127.90 0 0 1 31.88,178.50" fill="none" stroke="#672c7c" stroke-width="0.9"/>
<path d="M31.41,179.76 A127.90,127.90 0 0 1 36.26,168.24" fill="none" stroke="#6c2c77" stroke-width="0.9"/>
<path d="M35.68,169.45 A127.90,127.90 0 0 1 41.51,158.39" fill="none" stroke="#6f2c71" stroke-width="0.9"/>
<path d="M40.84,159.55 A127.90,127.90 0 0 1 47.60,149.05" fill="none" stroke="#732c6b" stroke-width="0.9"/>
<path d="M46.83,150.14 A127.90,127.90 0 0 1 54.49,140.27" fill="none" stroke="#762c66" stroke-width="0.9"/>
<path d="M53.62,141.29 A127.90,127.90 0 0 1 62.11,132.12" fill="none" stroke="#792c60" stroke-width="0.9"/>
<path d="M61.16,133.06 A127.90,127.90 0 0 1 70.42,124.67" fill="none" stroke="#7c2c5a" stroke-width="0.9"/>
<path d="M69.39,125.52 A127.90,127.90 0 0 1 79.34,117.97" fill="none" stroke="#802c54" stroke-width="0.9"/>
<path d="M78.24,118.73 A127.90,127.90 0 0 1 88.81,112.07" fill="none" stroke="#832c4f" stroke-width="0.9"/>
<path d="M87.65,112.74 A127.90,127.90 0 0 1 98.76,107.02" fill="none" stroke="#872c49" stroke-width="0.9"/>
<path d="M97.55,107.58 A127.90,127.90 0 0 1 109.12,102.86" fill="none" stroke="#8a2c43" stroke-width="0.9"/>
<path d="M107.86,103.31 A127.90,127.90 0 0 1 119.79,99.62" fill="none" stroke="#8d2c3e" stroke-width="0.9"/>
<path d="M118.50,99.96 A127.90,127.90 0 0 1 130.71,97.32" fill="none" stroke="#8d2c3d" stroke-width="0.9"/>
<path d="M129.39,97.54 A127.90,127.90 0 0 1 141.79,95.98" fill="none" stroke="#8d2c3b" stroke-width="0.9"/>
<path d="M140.45,96.09 A127.90,127.90 0 0 1 152.94,95.61" fill="none" stroke="#8d2c3a" stroke-width="0.9"/>
<line x1="7" y1="223.5" x2="297" y2="223.5" stroke="#000" stroke-width="1" stroke-dasharray="1,1"/>
<line x1="151.5" y1="79" x2="151.5" y2="367" stroke="#000" stroke-width="1" stroke-dasharray="1,1"/>
<line x1="102.04" y1="219.77" x2="23.36" y2="213.86" stroke="#ffee00" stroke-width="9" stroke-linecap="round"/>
<line x1="102.04" y1="219.77" x2="23.36" y2="213.86" stroke="#8010d8" stroke-width="5.5" stroke-linecap="round"/>
<line x1="127.03" y1="146.52" x2="112.38" y2="100.61" stroke="#ffee00" stroke-width="9" stroke-linecap="round"/>
<line x1="127.03" y1="146.52" x2="112.38" y2="100.61" stroke="#8010d8" stroke-width="5.5" stroke-linecap="round"/>
<line x1="130.50" y1="135.60" x2="121.58" y2="98.45" stroke="#ffee00" stroke-width="9" stroke-linecap="round"/>
<line x1="130.50" y1="135.60" x2="121.58" y2="98.45" stroke="#8010d8" stroke-width="5.5" stroke-linecap="round"/>
<line x1="251.40" y1="187.77" x2="272.11" y2="180.35" stroke="#ffee00" stroke-width="9" stroke-linecap="round"/>
<line x1="251.40" y1="187.77" x2="272.11" y2="180.35" stroke="#8010d8" stroke-width="5.5" stroke-linecap="round"/>
<line x1="258.52" y1="265.83" x2="270.80" y2="270.69" stroke="#ffee00" stroke-width="9" stroke-linecap="round"/>
<line x1="258.52" y1="265.83" x2="270.80" y2="270.69" stroke="#8010d8" stroke-width="5.5" stroke-linecap="round"/>
<line x1="176.28" y1="337.66" x2="178.82" y2="349.39" stroke="#ffee00" stroke-width="9" stroke-linecap="round"/>
<line x1="176.28" y1="337.66" x2="178.82" y2="349.39" stroke="#1464d8" stroke-width="5.5" stroke-linecap="round"/>
<line x1="190.67" y1="336.96" x2="193.27" y2="344.53" stroke="#ffee00" stroke-width="9" stroke-linecap="round"/>
<line x1="190.67" y1="336.96" x2="193.27" y2="344.53" stroke="#8010d8" stroke-width="5.5" stroke-linecap="round"/>
<line x1="191.32" y1="338.85" x2="193.27" y2="344.53" stroke="#ffee00" stroke-width="9" stroke-linecap="round"/>
<line x1="191.32" y1="338.85" x2="193.27" y2="344.53" stroke="#1464d8" stroke-width="5.5" stroke-linecap="round"/>
<line x1="268.81" y1="181.53" x2="272.11" y2="180.35" stroke="#ffee00" stroke-width="9" stroke-linecap="round"/>
<line x1="268.81" y1="181.53" x2="272.11" y2="180.35" stroke="#1464d8" stroke-width="5.5" stroke-linecap="round"/>
<line x1="116.46" y1="346.06" x2="116.43" y2="346.16" stroke="#ffee00" stroke-width="9" stroke-linecap="round"/>
<line x1="116.46" y1="346.06" x2="116.43" y2="346.16" stroke="#1464d8" stroke-width="5.5" stroke-linecap="round"/>
<rect x="128.12" y="152.58" width="3" height="2.5" fill="#1464d8"/>
<text x="134.10" y="96.10" text-anchor="middle" font-family="Liberation Sans" font-size="10.4" fill="#c80000" stroke="rgba(255,255,255,0.75)" stroke-width="2.5" paint-order="stroke" stroke-linejoin="round">N</text>
<text x="109.60" y="224.10" text-anchor="middle" font-family="Liberation Sans" font-size="10.4" fill="#8010d8" stroke="rgba(255,255,255,0.75)" stroke-width="2.5" paint-order="stroke" stroke-linejoin="round">8</text>
<text x="129.70" y="136.00" text-anchor="middle" font-family="Liberation Sans" font-size="10.4" fill="#8010d8" stroke="rgba(255,255,255,0.75)" stroke-width="2.5" paint-order="stroke" stroke-linejoin="round">2</text>
<text x="127.30" y="151.10" text-anchor="middle" font-family="Liberation Sans" font-size="10.4" fill="#8010d8" stroke="rgba(255,255,255,0.75)" stroke-width="2.5" paint-order="stroke" stroke-linejoin="round">4</text>
<text x="132.30" y="165.20" text-anchor="middle" font-family="Liberation Sans" font-size="10.4" fill="#1464d8" stroke="rgba(255,255,255,0.75)" stroke-width="2.5" paint-order="stroke" stroke-linejoin="round">26</text>
<text x="244.25" y="193.85" text-anchor="middle" font-family="Liberation Sans" font-size="10.4" fill="#8010d8" stroke="rgba(255,255,255,0.75)" stroke-width="2.5" paint-order="stroke" stroke-linejoin="round">3</text>
<text x="261.50" y="188.20" text-anchor="middle" font-family="Liberation Sans" font-size="10.4" fill="#1464d8" stroke="rgba(255,255,255,0.75)" stroke-width="2.5" paint-order="stroke" stroke-linejoin="round">10</text>
<text x="251.10" y="266.70" text-anchor="middle" font-family="Liberation Sans" font-size="10.4" fill="#8010d8" stroke="rgba(255,255,255,0.75)" stroke-width="2.5" paint-order="stroke" stroke-linejoin="round">5</text>
<text x="175.60" y="334.20" text-anchor="middle" font-family="Liberation Sans" font-size="10.4" fill="#1464d8" stroke="rgba(255,255,255,0.75)" stroke-width="2.5" paint-order="stroke" stroke-linejoin="round">13</text>
<text x="188.75" y="333.00" text-anchor="middle" font-family="Liberation Sans" font-size="10.4" fill="#8010d8" stroke="rgba(255,255,255,0.75)" stroke-width="2.5" paint-order="stroke" stroke-linejoin="round">6</text>
<text x="193.10" y="346.10" text-anchor="middle" font-family="Liberation Sans" font-size="10.4" fill="#1464d8" stroke="rgba(255,255,255,0.75)" stroke-width="2.5" paint-order="stroke" stroke-linejoin="round">6</text>
<text x="120.00" y="341.70" text-anchor="middle" font-family="Liberation Sans" font-size="10.4" fill="#1464d8" stroke="rgba(255,255,255,0.75)" stroke-width="2.5" paint-order="stroke" stroke-linejoin="round">10</text>
</svg>
<svg class="a" style="left:0;top:600px" width="800" height="168" viewBox="0 600 800 168">
<rect x="39" y="637" width="9.75" height="123" fill="#e8e8e8"/>
<rect x="70" y="632" width="30.6" height="128" fill="#e8e8e8"/>
<line x1="9" y1="645.50" x2="173" y2="645.50" stroke="#7a7a7a" stroke-width="1" stroke-dasharray="1,1"/>
<line x1="216" y1="645.50" x2="792" y2="645.50" stroke="#7a7a7a" stroke-width="1" stroke-dasharray="1,1"/>
<text x="202" y="648.30" text-anchor="end" font-family="Liberation Sans" font-size="11" fill="#111">-10</text>
<line x1="9" y1="657.50" x2="173" y2="657.50" stroke="#7a7a7a" stroke-width="1" stroke-dasharray="1,1"/>
<line x1="216" y1="657.50" x2="792" y2="657.50" stroke="#7a7a7a" stroke-width="1" stroke-dasharray="1,1"/>
<text x="202" y="661.07" text-anchor="end" font-family="Liberation Sans" font-size="11" fill="#111">-20</text>
<line x1="9" y1="670.50" x2="173" y2="670.50" stroke="#7a7a7a" stroke-width="1" stroke-dasharray="1,1"/>
<line x1="216" y1="670.50" x2="792" y2="670.50" stroke="#7a7a7a" stroke-width="1" stroke-dasharray="1,1"/>
<text x="202" y="673.85" text-anchor="end" font-family="Liberation Sans" font-size="11" fill="#111">-30</text>
<line x1="9" y1="683.50" x2="173" y2="683.50" stroke="#7a7a7a" stroke-width="1" stroke-dasharray="1,1"/>
<line x1="216" y1="683.50" x2="792" y2="683.50" stroke="#7a7a7a" stroke-width="1" stroke-dasharray="1,1"/>
<text x="202" y="686.62" text-anchor="end" font-family="Liberation Sans" font-size="11" fill="#111">-40</text>
<line x1="9" y1="696.50" x2="173" y2="696.50" stroke="#7a7a7a" stroke-width="1" stroke-dasharray="1,1"/>
<line x1="216" y1="696.50" x2="792" y2="696.50" stroke="#7a7a7a" stroke-width="1" stroke-dasharray="1,1"/>
<text x="202" y="699.40" text-anchor="end" font-family="Liberation Sans" font-size="11" fill="#111">-50</text>
<line x1="9" y1="708.50" x2="173" y2="708.50" stroke="#7a7a7a" stroke-width="1" stroke-dasharray="1,1"/>
<line x1="216" y1="708.50" x2="792" y2="708.50" stroke="#7a7a7a" stroke-width="1" stroke-dasharray="1,1"/>
<text x="202" y="712.17" text-anchor="end" font-family="Liberation Sans" font-size="11" fill="#111">-60</text>
<line x1="9" y1="721.50" x2="173" y2="721.50" stroke="#7a7a7a" stroke-width="1" stroke-dasharray="1,1"/>
<line x1="216" y1="721.50" x2="792" y2="721.50" stroke="#7a7a7a" stroke-width="1" stroke-dasharray="1,1"/>
<text x="202" y="724.95" text-anchor="end" font-family="Liberation Sans" font-size="11" fill="#111">-70</text>
<line x1="9" y1="734.50" x2="173" y2="734.50" stroke="#7a7a7a" stroke-width="1" stroke-dasharray="1,1"/>
<line x1="216" y1="734.50" x2="792" y2="734.50" stroke="#7a7a7a" stroke-width="1" stroke-dasharray="1,1"/>
<text x="202" y="737.72" text-anchor="end" font-family="Liberation Sans" font-size="11" fill="#111">-80</text>
<line x1="9" y1="747.50" x2="173" y2="747.50" stroke="#7a7a7a" stroke-width="1" stroke-dasharray="1,1"/>
<line x1="216" y1="747.50" x2="792" y2="747.50" stroke="#7a7a7a" stroke-width="1" stroke-dasharray="1,1"/>
<text x="202" y="750.50" text-anchor="end" font-family="Liberation Sans" font-size="11" fill="#111">-90</text>
<text x="194" y="635.4" text-anchor="middle" font-family="Liberation Sans" font-size="11" fill="#111">dBm</text>
<text x="194" y="761.5" text-anchor="middle" font-family="Liberation Sans" font-size="10" fill="#000">Channel</text>
<path d="M13,632.5 H7.5 V760 H173.3 V632.5 H162" fill="none" stroke="#000" stroke-width="2"/>
<line x1="64.5" y1="632.5" x2="112" y2="632.5" stroke="#000" stroke-width="2"/>
<path d="M482,632.5 H215 V760 H792.3 V632.5 H524" fill="none" stroke="#000" stroke-width="2"/>
<text x="20" y="635.8" font-family="Liberation Sans" font-size="11" font-weight="bold" fill="#000">VHF Lo</text>
<text x="119.6" y="635.8" font-family="Liberation Sans" font-size="11" font-weight="bold" fill="#000">VHF Hi</text>
<text x="492" y="636" font-family="Liberation Sans" font-size="11" font-weight="bold" fill="#000">UHF</text>
<rect x="10.00" y="756" width="6.20" height="7" fill="#fff"/>
<text x="13.10" y="762" text-anchor="middle" font-family="Liberation Sans" font-size="7.5" fill="#000">2</text>
<rect x="31.00" y="756" width="6.20" height="7" fill="#fff"/>
<text x="34.10" y="762" text-anchor="middle" font-family="Liberation Sans" font-size="7.5" fill="#000">4</text>
<rect x="52.50" y="756" width="6.20" height="7" fill="#fff"/>
<text x="55.60" y="762" text-anchor="middle" font-family="Liberation Sans" font-size="7.5" fill="#000">5</text>
<rect x="62.00" y="756" width="6.20" height="7" fill="#fff"/>
<text x="65.10" y="762" text-anchor="middle" font-family="Liberation Sans" font-size="7.5" fill="#000">6</text>
<rect x="102.90" y="756" width="6.20" height="7" fill="#fff"/>
<text x="106.00" y="762" text-anchor="middle" font-family="Liberation Sans" font-size="7.5" fill="#000">7</text>
<rect x="123.90" y="756" width="6.20" height="7" fill="#fff"/>
<text x="127.00" y="762" text-anchor="middle" font-family="Liberation Sans" font-size="7.5" fill="#000">9</text>
<rect x="142.30" y="756" width="10.40" height="7" fill="#fff"/>
<text x="147.50" y="762" text-anchor="middle" font-family="Liberation Sans" font-size="7.5" fill="#000">11</text>
<rect x="163.30" y="756" width="10.40" height="7" fill="#fff"/>
<text x="168.50" y="762" text-anchor="middle" font-family="Liberation Sans" font-size="7.5" fill="#000">13</text>
<rect x="214.80" y="756" width="10.40" height="7" fill="#fff"/>
<text x="220.00" y="762" text-anchor="middle" font-family="Liberation Sans" font-size="7.5" fill="#000">14</text>
<rect x="235.40" y="756" width="10.40" height="7" fill="#fff"/>
<text x="240.60" y="762" text-anchor="middle" font-family="Liberation Sans" font-size="7.5" fill="#000">16</text>
<rect x="266.30" y="756" width="10.40" height="7" fill="#fff"/>
<text x="271.50" y="762" text-anchor="middle" font-family="Liberation Sans" font-size="7.5" fill="#000">19</text>
<rect x="297.20" y="756" width="10.40" height="7" fill="#fff"/>
<text x="302.40" y="762" text-anchor="middle" font-family="Liberation Sans" font-size="7.5" fill="#000">22</text>
<rect x="328.10" y="756" width="10.40" height="7" fill="#fff"/>
<text x="333.30" y="762" text-anchor="middle" font-family="Liberation Sans" font-size="7.5" fill="#000">25</text>
<rect x="359.00" y="756" width="10.40" height="7" fill="#fff"/>
<text x="364.20" y="762" text-anchor="middle" font-family="Liberation Sans" font-size="7.5" fill="#000">28</text>
<rect x="389.90" y="756" width="10.40" height="7" fill="#fff"/>
<text x="395.10" y="762" text-anchor="middle" font-family="Liberation Sans" font-size="7.5" fill="#000">31</text>
<rect x="420.80" y="756" width="10.40" height="7" fill="#fff"/>
<text x="426.00" y="762" text-anchor="middle" font-family="Liberation Sans" font-size="7.5" fill="#000">34</text>
<rect x="451.70" y="756" width="10.40" height="7" fill="#fff"/>
<text x="456.90" y="762" text-anchor="middle" font-family="Liberation Sans" font-size="7.5" fill="#000">37</text>
<rect x="482.60" y="756" width="10.40" height="7" fill="#fff"/>
<text x="487.80" y="762" text-anchor="middle" font-family="Liberation Sans" font-size="7.5" fill="#000">40</text>
<rect x="513.50" y="756" width="10.40" height="7" fill="#fff"/>
<text x="518.70" y="762" text-anchor="middle" font-family="Liberation Sans" font-size="7.5" fill="#000">43</text>
<rect x="544.40" y="756" width="10.40" height="7" fill="#fff"/>
<text x="549.60" y="762" text-anchor="middle" font-family="Liberation Sans" font-size="7.5" fill="#000">46</text>
<rect x="575.30" y="756" width="10.40" height="7" fill="#fff"/>
<text x="580.50" y="762" text-anchor="middle" font-family="Liberation Sans" font-size="7.5" fill="#000">49</text>
<rect x="606.20" y="756" width="10.40" height="7" fill="#fff"/>
<text x="611.40" y="762" text-anchor="middle" font-family="Liberation Sans" font-size="7.5" fill="#000">52</text>
<rect x="637.10" y="756" width="10.40" height="7" fill="#fff"/>
<text x="642.30" y="762" text-anchor="middle" font-family="Liberation Sans" font-size="7.5" fill="#000">55</text>
<rect x="668.00" y="756" width="10.40" height="7" fill="#fff"/>
<text x="673.20" y="762" text-anchor="middle" font-family="Liberation Sans" font-size="7.5" fill="#000">58</text>
<rect x="698.90" y="756" width="10.40" height="7" fill="#fff"/>
<text x="704.10" y="762" text-anchor="middle" font-family="Liberation Sans" font-size="7.5" fill="#000">61</text>
<rect x="729.80" y="756" width="10.40" height="7" fill="#fff"/>
<text x="735.00" y="762" text-anchor="middle" font-family="Liberation Sans" font-size="7.5" fill="#000">64</text>
<rect x="760.70" y="756" width="10.40" height="7" fill="#fff"/>
<text x="765.90" y="762" text-anchor="middle" font-family="Liberation Sans" font-size="7.5" fill="#000">67</text>
<rect x="781.30" y="756" width="10.40" height="7" fill="#fff"/>
<text x="786.50" y="762" text-anchor="middle" font-family="Liberation Sans" font-size="7.5" fill="#000">69</text>
<rect x="7.30" y="709.79" width="12" height="6.6" rx="3.3" fill="#ffee00"/>
<rect x="8.70" y="711.49" width="9.2" height="3.2" rx="1" fill="#8010d8"/>
<text transform="translate(16.80,707.79) rotate(-90) scale(1.06,1)" font-family="Liberation Sans" font-size="9.8" fill="#8010d8" stroke="rgba(255,255,255,0.8)" stroke-width="2" paint-order="stroke">CKCO-TV-2</text>
<rect x="17.80" y="728.44" width="12" height="6.6" rx="3.3" fill="#ffee00"/>
<rect x="19.20" y="730.14" width="9.2" height="3.2" rx="1" fill="#8010d8"/>
<text transform="translate(27.30,726.44) rotate(-90) scale(1.06,1)" font-family="Liberation Sans" font-size="9.8" fill="#8010d8" stroke="rgba(255,255,255,0.8)" stroke-width="2" paint-order="stroke">CKVRTV</text>
<rect x="27.70" y="695.99" width="12" height="6.6" rx="3.3" fill="#ffee00"/>
<rect x="29.10" y="697.69" width="9.2" height="3.2" rx="1" fill="#8010d8"/>
<text transform="translate(37.20,693.99) rotate(-90) scale(1.06,1)" font-family="Liberation Sans" font-size="9.8" fill="#8010d8" stroke="rgba(255,255,255,0.8)" stroke-width="2" paint-order="stroke">CIII-TV-4</text>
<rect x="48.70" y="739.56" width="12" height="6.6" rx="3.3" fill="#ffee00"/>
<rect x="50.10" y="741.26" width="9.2" height="3.2" rx="1" fill="#8010d8"/>
<text transform="translate(58.20,737.56) rotate(-90) scale(1.06,1)" font-family="Liberation Sans" font-size="9.8" fill="#8010d8" stroke="rgba(255,255,255,0.8)" stroke-width="2" paint-order="stroke">CBLT</text>
<rect x="110.30" y="660.10" width="12" height="6.6" rx="3.3" fill="#ffee00"/>
<rect x="111.70" y="661.80" width="9.2" height="3.2" rx="1" fill="#8010d8"/>
<text transform="translate(119.80,658.10) rotate(-90) scale(1.06,1)" font-family="Liberation Sans" font-size="9.8" fill="#8010d8" stroke="rgba(255,255,255,0.8)" stroke-width="2" paint-order="stroke">CKNX-TV</text>
<rect x="338.90" y="705.49" width="9.2" height="3.2" rx="1" fill="#1464d8"/>
<text transform="translate(347.00,701.79) rotate(-90) scale(1.06,1)" font-family="Liberation Sans" font-size="9.8" fill="#1464d8" stroke="rgba(255,255,255,0.8)" stroke-width="2" paint-order="stroke">CIII-DT-4</text>
</svg>
</body></html>
